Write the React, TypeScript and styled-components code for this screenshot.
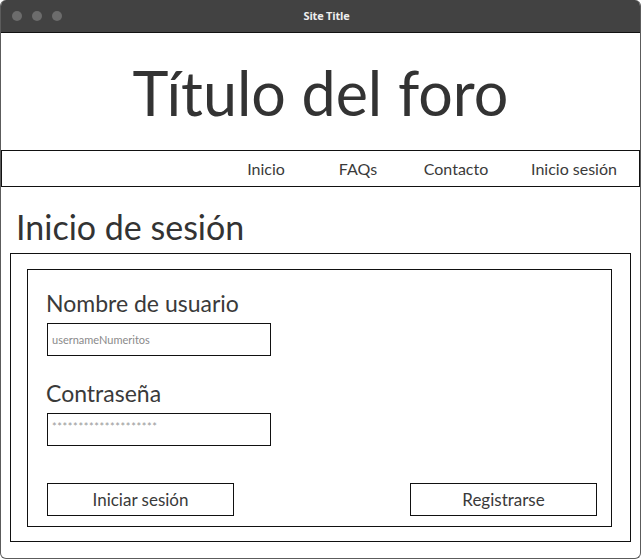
import React from "react";
import styled, { createGlobalStyle } from "styled-components";

const GlobalStyle = createGlobalStyle`
  html, body { margin: 0; padding: 0; background: #ffffff; }
  * { box-sizing: border-box; }
`;

const FONT = `"Lato", "Noto Sans", "Liberation Sans", sans-serif`;

const Window = styled.div`
  width: 641px;
  height: 559px;
  display: flex;
  flex-direction: column;
  border: 1px solid #5c5c5c;
  border-top: none;
  border-radius: 6px;
  overflow: hidden;
  font-family: ${FONT};
  color: #333333;
  background: #ffffff;
`;

const TitleBar = styled.div`
  height: 32px;
  flex: none;
  background: #424242;
  display: grid;
  grid-template-columns: 1fr auto 1fr;
  align-items: center;
  margin: 0 -1px;
  padding: 0 0 1px 12px;
`;

const Dots = styled.div`
  display: flex;
  gap: 10px;
`;

const Dot = styled.span`
  width: 10px;
  height: 10px;
  border-radius: 50%;
  background: #6c6c6c;
`;

const SiteTitle = styled.div`
  font-family: "Open Sans", "Liberation Sans", sans-serif;
  font-weight: 700;
  font-size: 11px;
  color: #eeeeee;
  letter-spacing: -0.2px;
`;

const Body = styled.div`
  flex: 1;
  display: flex;
  flex-direction: column;
  border-top: 1px solid #111111;
`;

const Header = styled.header`
  height: 117px;
  display: flex;
  align-items: center;
  justify-content: center;
  padding-top: 1px;
`;

const ForumTitle = styled.h1`
  margin: 0;
  font-weight: 400;
  font-size: 61px;
  line-height: 1;
  color: #333333;
`;

const Nav = styled.nav`
  height: 37px;
  border: 1px solid #111111;
  display: flex;
  justify-content: flex-end;
  align-items: center;
`;

const NavItem = styled.a<{ $w: number }>`
  width: ${(p) => p.$w}px;
  text-align: center;
  font-size: 16px;
  color: #3a3a3a;
  text-decoration: none;
`;

const Main = styled.main`
  padding: 20px 9px 0 9px;
`;

const PageHeading = styled.h2`
  margin: 0 0 6px 6px;
  font-weight: 400;
  font-size: 34px;
  line-height: 40px;
  color: #333333;
`;

const OuterBox = styled.section`
  height: 289px;
  border: 1px solid #111111;
  padding: 15px 18px 14px 16px;
`;

const InnerBox = styled.form`
  height: 100%;
  border: 1px solid #111111;
  padding: 19px 14px 0 19px;
  display: flex;
  flex-direction: column;
`;

const Label = styled.label<{ $top: number }>`
  display: block;
  margin: ${(p) => p.$top}px 0 6px -1px;
  font-size: 23px;
  line-height: 28px;
  color: #3a3a3a;
`;

const Field = styled.input`
  width: 224px;
  height: 33px;
  border: 1px solid #111111;
  padding: 0 4px;
  font-family: ${FONT};
  font-size: 11px;
  color: #555555;
  background: #ffffff;
  outline: none;
  &::placeholder {
    color: #8a8a8a;
  }
`;

const Stars = styled(Field)`
  padding-bottom: 6px;
  &::placeholder {
    color: #999999;
    letter-spacing: 0.6px;
  }
`;

const Actions = styled.div`
  margin-top: 37px;
  display: flex;
  justify-content: space-between;
`;

const Button = styled.button`
  width: 187px;
  height: 33px;
  border: 1px solid #111111;
  background: #ffffff;
  font-family: ${FONT};
  font-size: 17px;
  color: #3a3a3a;
  padding: 0;
  cursor: pointer;
`;

export default function App() {
  return (
    <>
      <GlobalStyle />
      <Window>
        <TitleBar>
          <Dots>
            <Dot />
            <Dot />
            <Dot />
          </Dots>
          <SiteTitle>Site Title</SiteTitle>
          <div />
        </TitleBar>
        <Body>
          <Header>
            <ForumTitle>Título del foro</ForumTitle>
          </Header>
          <Nav>
            <NavItem $w={94}>Inicio</NavItem>
            <NavItem $w={90}>FAQs</NavItem>
            <NavItem $w={106}>Contacto</NavItem>
            <NavItem $w={130}>Inicio sesión</NavItem>
          </Nav>
          <Main>
            <PageHeading>Inicio de sesión</PageHeading>
            <OuterBox>
              <InnerBox onSubmit={(e) => e.preventDefault()}>
                <Label $top={0}>Nombre de usuario</Label>
                <Field placeholder="usernameNumeritos" />
                <Label $top={23}>Contraseña</Label>
                <Stars placeholder="********************" />
                <Actions>
                  <Button type="submit">Iniciar sesión</Button>
                  <Button type="button">Registrarse</Button>
                </Actions>
              </InnerBox>
            </OuterBox>
          </Main>
        </Body>
      </Window>
    </>
  );
}
